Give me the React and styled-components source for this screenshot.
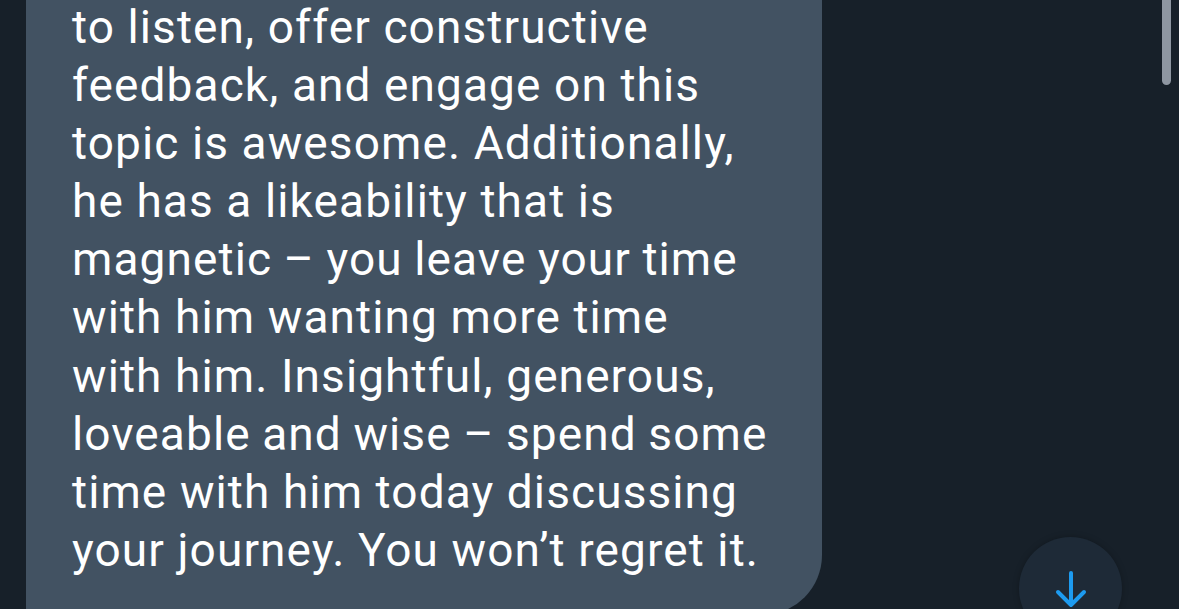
import React from "react";
import styled, { createGlobalStyle } from "styled-components";

const GlobalStyle = createGlobalStyle`
  html, body {
    margin: 0;
    padding: 0;
    background: #172029;
    overflow: hidden;
  }
`;

const Screen = styled.main`
  position: relative;
  width: 1179px;
  height: 609px;
  overflow: hidden;
  background: #172029;
  font-family: Roboto, "Noto Sans", sans-serif;
`;

const Bubble = styled.div`
  margin: -2px 0 0 26px;
  width: 796px;
  box-sizing: border-box;
  padding: 0 20px 36px 46px;
  background: #425262;
  border-radius: 0 0 60px 0;
  color: #ffffff;
`;

const Line = styled.span`
  display: block;
  white-space: nowrap;
  font-size: 46px;
  line-height: 58.1px;
  letter-spacing: 1.1px;
  word-spacing: ${(p) => (p.$tight ? "-1px" : "0")};
`;

const Scrollbar = styled.div`
  position: absolute;
  top: -10px;
  right: 8px;
  width: 9px;
  height: 95px;
  border-radius: 5px;
  background: #8e96a1;
`;

const ScrollDown = styled.button`
  position: absolute;
  left: 1019px;
  top: 537px;
  width: 103px;
  height: 103px;
  border-radius: 50%;
  border: none;
  padding: 0;
  background: #1e2a37;
  box-shadow: 0 0 6px rgba(0, 0, 0, 0.25);
  display: flex;
  justify-content: center;
  align-items: flex-start;
  padding-top: 34px;
  box-sizing: border-box;
`;

const lines = [
  "to listen, offer constructive",
  "feedback, and engage on this",
  "topic is awesome. Additionally,",
  "he has a likeability that is",
  "magnetic – you leave your time",
  "with him wanting more time",
  "with him. Insightful, generous,",
  "loveable and wise – spend some",
  "time with him today discussing",
  "your journey. You won’t regret it.",
];

function ArrowDown() {
  return (
    <svg width="32" height="38" viewBox="0 0 32 38" fill="none">
      <path
        d="M16 2v32M3 21l13 13 13-13"
        stroke="#1d9bf0"
        strokeWidth="4"
        strokeLinecap="round"
        strokeLinejoin="round"
      />
    </svg>
  );
}

export default function App() {
  return (
    <Screen>
      <GlobalStyle />
      <Bubble>
        {lines.map((t, i) => (
          <Line key={i} $tight={t.includes("–")}>
            {t}
          </Line>
        ))}
      </Bubble>
      <Scrollbar />
      <ScrollDown aria-label="Scroll to bottom">
        <ArrowDown />
      </ScrollDown>
    </Screen>
  );
}
